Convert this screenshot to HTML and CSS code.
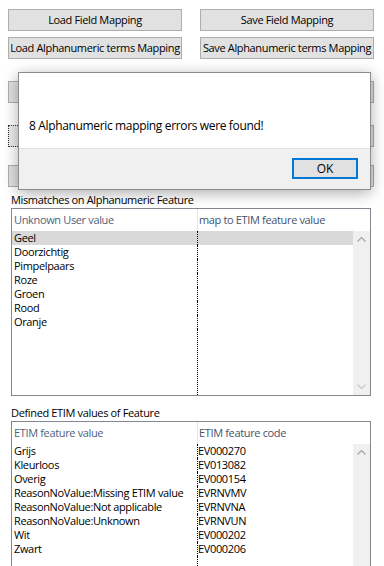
FILE: index.html
```html
<!DOCTYPE html>
<html>
<head>
<meta charset="utf-8">
<link rel="stylesheet" href="styles.css">
</head>
<body>
<div class="form">
  <div class="btn-row first">
    <button class="btn">Load Field Mapping</button>
    <button class="btn">Save Field Mapping</button>
  </div>
  <div class="btn-row second">
    <button class="btn">Load Alphanumeric terms Mapping</button>
    <button class="btn">Save Alphanumeric terms Mapping</button>
  </div>
  <div class="btn-row gap22">
    <button class="btn"></button>
    <button class="btn"></button>
  </div>
  <div class="btn-row gap22">
    <button class="btn focus"></button>
    <button class="btn"></button>
  </div>
  <div class="btn-row gap18">
    <button class="btn"></button>
    <button class="btn"></button>
  </div>

  <div class="label label1">Mismatches on Alphanumeric Feature</div>
  <div class="list list1">
    <div class="list-head">
      <div class="head-cell c1">Unknown User value</div>
      <div class="head-cell c2">map to ETIM feature value</div>
    </div>
    <div class="list-body">
      <div class="rows">
        <div class="row selected"><div class="cell c1">Geel</div><div class="cell c2"></div></div>
        <div class="row"><div class="cell c1">Doorzichtig</div><div class="cell c2"></div></div>
        <div class="row"><div class="cell c1">Pimpelpaars</div><div class="cell c2"></div></div>
        <div class="row"><div class="cell c1">Roze</div><div class="cell c2"></div></div>
        <div class="row"><div class="cell c1">Groen</div><div class="cell c2"></div></div>
        <div class="row"><div class="cell c1">Rood</div><div class="cell c2"></div></div>
        <div class="row"><div class="cell c1">Oranje</div><div class="cell c2"></div></div>
        <div class="row fill"><div class="cell c1"></div><div class="cell c2"></div></div>
      </div>
      <div class="scrollbar">
        <div class="arrow"><svg width="9" height="5" viewBox="0 0 9 5"><polyline points="0.5,4.5 4.5,0.5 8.5,4.5" fill="none" stroke="#a6a6a6" stroke-width="1.2"/></svg></div>
        <div class="track"></div>
        <div class="arrow"><svg width="9" height="5" viewBox="0 0 9 5"><polyline points="0.5,0.5 4.5,4.5 8.5,0.5" fill="none" stroke="#c8c8c8" stroke-width="1.2"/></svg></div>
      </div>
    </div>
  </div>

  <div class="label label2">Defined ETIM values of Feature</div>
  <div class="list list2">
    <div class="list-head">
      <div class="head-cell c1">ETIM feature value</div>
      <div class="head-cell c2">ETIM feature code</div>
    </div>
    <div class="list-body">
      <div class="rows">
        <div class="row"><div class="cell c1">Grijs</div><div class="cell c2">EV000270</div></div>
        <div class="row"><div class="cell c1">Kleurloos</div><div class="cell c2">EV013082</div></div>
        <div class="row"><div class="cell c1">Overig</div><div class="cell c2">EV000154</div></div>
        <div class="row"><div class="cell c1">ReasonNoValue:Missing ETIM value</div><div class="cell c2">EVRNVMV</div></div>
        <div class="row"><div class="cell c1">ReasonNoValue:Not applicable</div><div class="cell c2">EVRNVNA</div></div>
        <div class="row"><div class="cell c1">ReasonNoValue:Unknown</div><div class="cell c2">EVRNVUN</div></div>
        <div class="row"><div class="cell c1">Wit</div><div class="cell c2">EV000202</div></div>
        <div class="row"><div class="cell c1">Zwart</div><div class="cell c2">EV000206</div></div>
        <div class="row fill"><div class="cell c1"></div><div class="cell c2"></div></div>
      </div>
      <div class="scrollbar">
        <div class="arrow"><svg width="9" height="5" viewBox="0 0 9 5"><polyline points="0.5,4.5 4.5,0.5 8.5,4.5" fill="none" stroke="#a6a6a6" stroke-width="1.2"/></svg></div>
        <div class="track"></div>
      </div>
    </div>
  </div>
</div>

<div class="dialog">
  <div class="dialog-body">8 Alphanumeric mapping errors were found!</div>
  <div class="dialog-foot">
    <button class="ok">OK</button>
  </div>
</div>
</body>
</html>
```

FILE: styles.css
```css
html, body {
  margin: 0;
  padding: 0;
  background: #ffffff;
  overflow: hidden;
  height: 566px;
}
body {
  font-family: "Open Sans", "Noto Sans", sans-serif;
  font-size: 11px;
  letter-spacing: -0.35px;
  color: #000;
  position: relative;
}
.form {
  padding-top: 9px;
}
.btn-row {
  display: grid;
  grid-template-columns: 174px 174px;
  column-gap: 18px;
  margin-left: 8px;
}
.btn-row.second { margin-top: 6px; }
.btn-row.gap22 { margin-top: 22px; }
.btn-row.gap18 { margin-top: 18px; }
.btn {
  height: 22px;
  box-sizing: border-box;
  margin: 0;
  padding: 0;
  border: 1px solid #adadad;
  background: #e1e1e1;
  font-family: inherit;
  font-size: 11px;
  letter-spacing: -0.35px;
  color: #000;
  line-height: 20px;
  white-space: nowrap;
}
.btn.focus {
  border: 1px dotted #333;
  background: #ececec;
}
.label {
  height: 17px;
  line-height: 17px;
  padding-left: 11px;
}
.label1 { margin-top: 4px; }
.label2 { margin-top: 8px; }
.list {
  margin-left: 11px;
  width: 360px;
  box-sizing: border-box;
  border: 1px solid #828790;
  display: flex;
  flex-direction: column;
  background: #fff;
}
.list1 { height: 188px; }
.list2 { height: 170px; }
.list-head {
  display: grid;
  grid-template-columns: 186px 1fr;
  height: 22px;
  flex: none;
}
.head-cell {
  line-height: 22px;
  color: #4d5f7e;
  white-space: nowrap;
}
.head-cell.c1 {
  padding-left: 2px;
  border-right: 1px solid #e5e5e5;
}
.head-cell.c2 {
  padding-left: 1px;
  color: #45536b;
}
.list-body {
  flex: 1;
  display: flex;
  min-height: 0;
}
.rows {
  flex: 1;
  display: flex;
  flex-direction: column;
}
.row {
  display: grid;
  grid-template-columns: 185px 1fr;
  height: 14px;
  line-height: 14px;
  flex: none;
}
.row.fill {
  flex: 1;
  height: auto;
}
.row.selected .cell {
  background: #d9d9d9;
}
.cell {
  white-space: nowrap;
  overflow: hidden;
}
.cell.c1 {
  padding-left: 2px;
}
.cell.c2 {
  border-left: 1px dotted #000;
  padding-left: 0;
}
.scrollbar {
  width: 17px;
  background: #f0f0f0;
  display: flex;
  flex-direction: column;
  flex: none;
}
.arrow {
  height: 17px;
  display: flex;
  align-items: center;
  justify-content: center;
  flex: none;
}
.track { flex: 1; }

.dialog {
  position: absolute;
  left: 18px;
  top: 72px;
  width: 353px;
  height: 118px;
  box-sizing: border-box;
  border: 1px solid #8c8c8c;
  background: #fff;
  box-shadow: 0 3px 14px rgba(0, 0, 0, 0.33);
  display: flex;
  flex-direction: column;
}
.dialog-body {
  height: 75px;
  box-sizing: border-box;
  padding: 46px 0 0 10px;
  font-size: 12px;
  letter-spacing: -0.35px;
  line-height: 14px;
  color: #000;
  background: #fff;
}
.dialog-foot {
  flex: 1;
  background: #f0f0f0;
  border-top: 1px solid #e4e4e4;
  display: flex;
  justify-content: flex-end;
  align-items: flex-start;
  padding: 9px 12px 0 0;
}
.ok {
  width: 66px;
  height: 21px;
  box-sizing: border-box;
  margin: 0;
  padding: 0;
  border: 2px solid #0078d7;
  background: #e1e1e1;
  font-family: inherit;
  font-size: 12px;
  letter-spacing: 0;
  line-height: 17px;
  color: #000;
}
```
